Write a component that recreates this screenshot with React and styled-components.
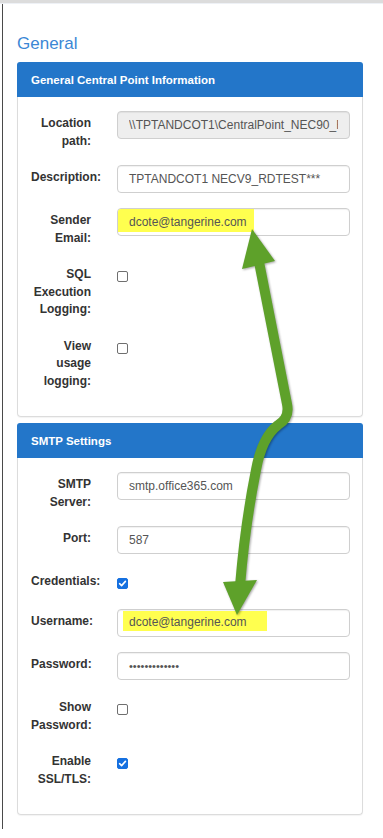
import React from 'react';
import styled, { createGlobalStyle } from 'styled-components';

const GlobalStyle = createGlobalStyle`
  body {
    margin: 0;
    background: #fff;
    font-family: "Liberation Sans", Arial, sans-serif;
  }
`;

const Page = styled.div`
  position: relative;
  width: 383px;
  height: 838px;
  overflow: hidden;
`;

const TopStrip = styled.div`
  height: 3px;
  background: #dcdcdc;
  border-bottom: 1px solid #eef1f6;
`;

const Frame = styled.div`
  margin-left: 2px;
  border-left: 1px solid #4a4a4a;
  padding: 30px 0 8px 14px;
`;

const Heading = styled.h3`
  margin: 0 0 9px;
  font-size: 17px;
  line-height: 19px;
  font-weight: normal;
  color: #3b87d5;
`;

const Panel = styled.div`
  width: 346px;
  margin-bottom: 6px;
`;

const PanelHeader = styled.div`
  height: 35px;
  display: flex;
  align-items: center;
  padding-left: 14px;
  background: #2376c9;
  border-radius: 3px 3px 0 0;
  color: #fff;
  font-size: 11.5px;
  font-weight: bold;
`;

const PanelBody = styled.div`
  border: 1px solid #dcdcdc;
  border-top: none;
  border-radius: 0 0 4px 4px;
  padding: 14px 12px 11px 13px;
  box-shadow: 0 1px 1px rgba(0, 0, 0, 0.05);
`;

const Row = styled.div`
  display: flex;
  align-items: flex-start;
  margin-bottom: 15px;
  min-height: ${p => (p.check ? '25px' : '0')};
`;

const Label = styled.label`
  flex: 0 0 60px;
  min-width: 0;
  margin-right: 26px;
  padding-top: 4px;
  font-size: 12px;
  line-height: 17.5px;
  font-weight: bold;
  color: #333;
  text-align: ${p => (p.wide ? 'left' : 'right')};
  white-space: ${p => (p.wide ? 'nowrap' : 'normal')};
`;

const TextBox = styled.div`
  flex: 1;
  min-width: 0;
  height: 28px;
  box-sizing: border-box;
  display: flex;
  align-items: center;
  padding: 0 11px;
  border: 1px solid #cfcfcf;
  border-radius: 4px;
  background: ${p => (p.disabled ? '#eeeeee' : '#fff')};
  box-shadow: inset 0 1px 1px rgba(0, 0, 0, 0.06);
  font-size: 12px;
  line-height: 14px;
  color: #555;
  white-space: nowrap;
  overflow: hidden;
`;

const Value = styled.span`
  flex: 1;
  min-width: 0;
  overflow: hidden;
`;

const Mark = styled.span`
  align-self: flex-start;
  background: #ffff4f;
  margin-left: ${p => p.ml}px;
  margin-top: ${p => p.mt}px;
  padding: ${p => p.pad};
`;

const Dots = styled.span`
  font-size: 11px;
`;

const Box = styled.span`
  width: 11px;
  height: 11px;
  box-sizing: border-box;
  margin-top: 9px;
  display: flex;
  align-items: center;
  justify-content: center;
  border-radius: 2px;
  border: 1px solid ${p => (p.checked ? '#1570e0' : '#6f6f6f')};
  background: ${p => (p.checked ? '#1570e0' : '#fff')};
`;

const Overlay = styled.svg`
  position: absolute;
  left: 0;
  top: 0;
  pointer-events: none;
  filter: drop-shadow(1px 1px 1px rgba(0, 0, 0, 0.35));
`;

const CheckBox = ({ checked }) => (
  <Box checked={checked}>
    {checked && (
      <svg width="9" height="9" viewBox="0 0 9 9">
        <polyline points="1.6,4.7 3.6,6.6 7.4,2.4" fill="none" stroke="#fff" strokeWidth="1.6" strokeLinecap="round" strokeLinejoin="round" />
      </svg>
    )}
  </Box>
);

const App = () => (
  <Page>
    <GlobalStyle />
    <TopStrip />
    <Frame>
      <Heading>General</Heading>

      <Panel>
        <PanelHeader>General Central Point Information</PanelHeader>
        <PanelBody>
          <Row>
            <Label>Location path:</Label>
            <TextBox disabled>
              <Value>\\TPTANDCOT1\CentralPoint_NEC90_RDTEST</Value>
            </TextBox>
          </Row>
          <Row>
            <Label wide>Description:</Label>
            <TextBox>TPTANDCOT1 NECV9_RDTEST***</TextBox>
          </Row>
          <Row>
            <Label>Sender Email:</Label>
            <TextBox>
              <Mark ml={-11} mt={0} pad="6px 7px 3px 11px">dcote@tangerine.com</Mark>
            </TextBox>
          </Row>
          <Row check>
            <Label>SQL Execution Logging:</Label>
            <CheckBox />
          </Row>
          <Row check>
            <Label>View usage logging:</Label>
            <CheckBox />
          </Row>
        </PanelBody>
      </Panel>

      <Panel>
        <PanelHeader>SMTP Settings</PanelHeader>
        <PanelBody>
          <Row>
            <Label>SMTP Server:</Label>
            <TextBox>smtp.office365.com</TextBox>
          </Row>
          <Row>
            <Label>Port:</Label>
            <TextBox>587</TextBox>
          </Row>
          <Row check>
            <Label wide>Credentials:</Label>
            <CheckBox checked />
          </Row>
          <Row>
            <Label wide>Username:</Label>
            <TextBox>
              <Mark ml={-6} mt={1} pad="4px 20px 2px 6px">dcote@tangerine.com</Mark>
            </TextBox>
          </Row>
          <Row>
            <Label wide>Password:</Label>
            <TextBox>
              <Dots>•••••••••••••</Dots>
            </TextBox>
          </Row>
          <Row check>
            <Label>Show Password:</Label>
            <CheckBox />
          </Row>
          <Row check>
            <Label>Enable SSL/TLS:</Label>
            <CheckBox checked />
          </Row>
        </PanelBody>
      </Panel>
    </Frame>

    <Overlay width="383" height="838" viewBox="0 0 383 838">
      <path
        d="M 259 262 L 287 404 Q 290 418 278 425 Q 262 437 256 470 Q 245 525 240 586"
        fill="none"
        stroke="#5ea12a"
        strokeWidth="10"
        strokeLinejoin="round"
      />
      <polygon points="252,229 242,269 275,261" fill="#5ea12a" />
      <polygon points="237,615 223,582 257,580" fill="#5ea12a" />
    </Overlay>
  </Page>
);

export default App;
